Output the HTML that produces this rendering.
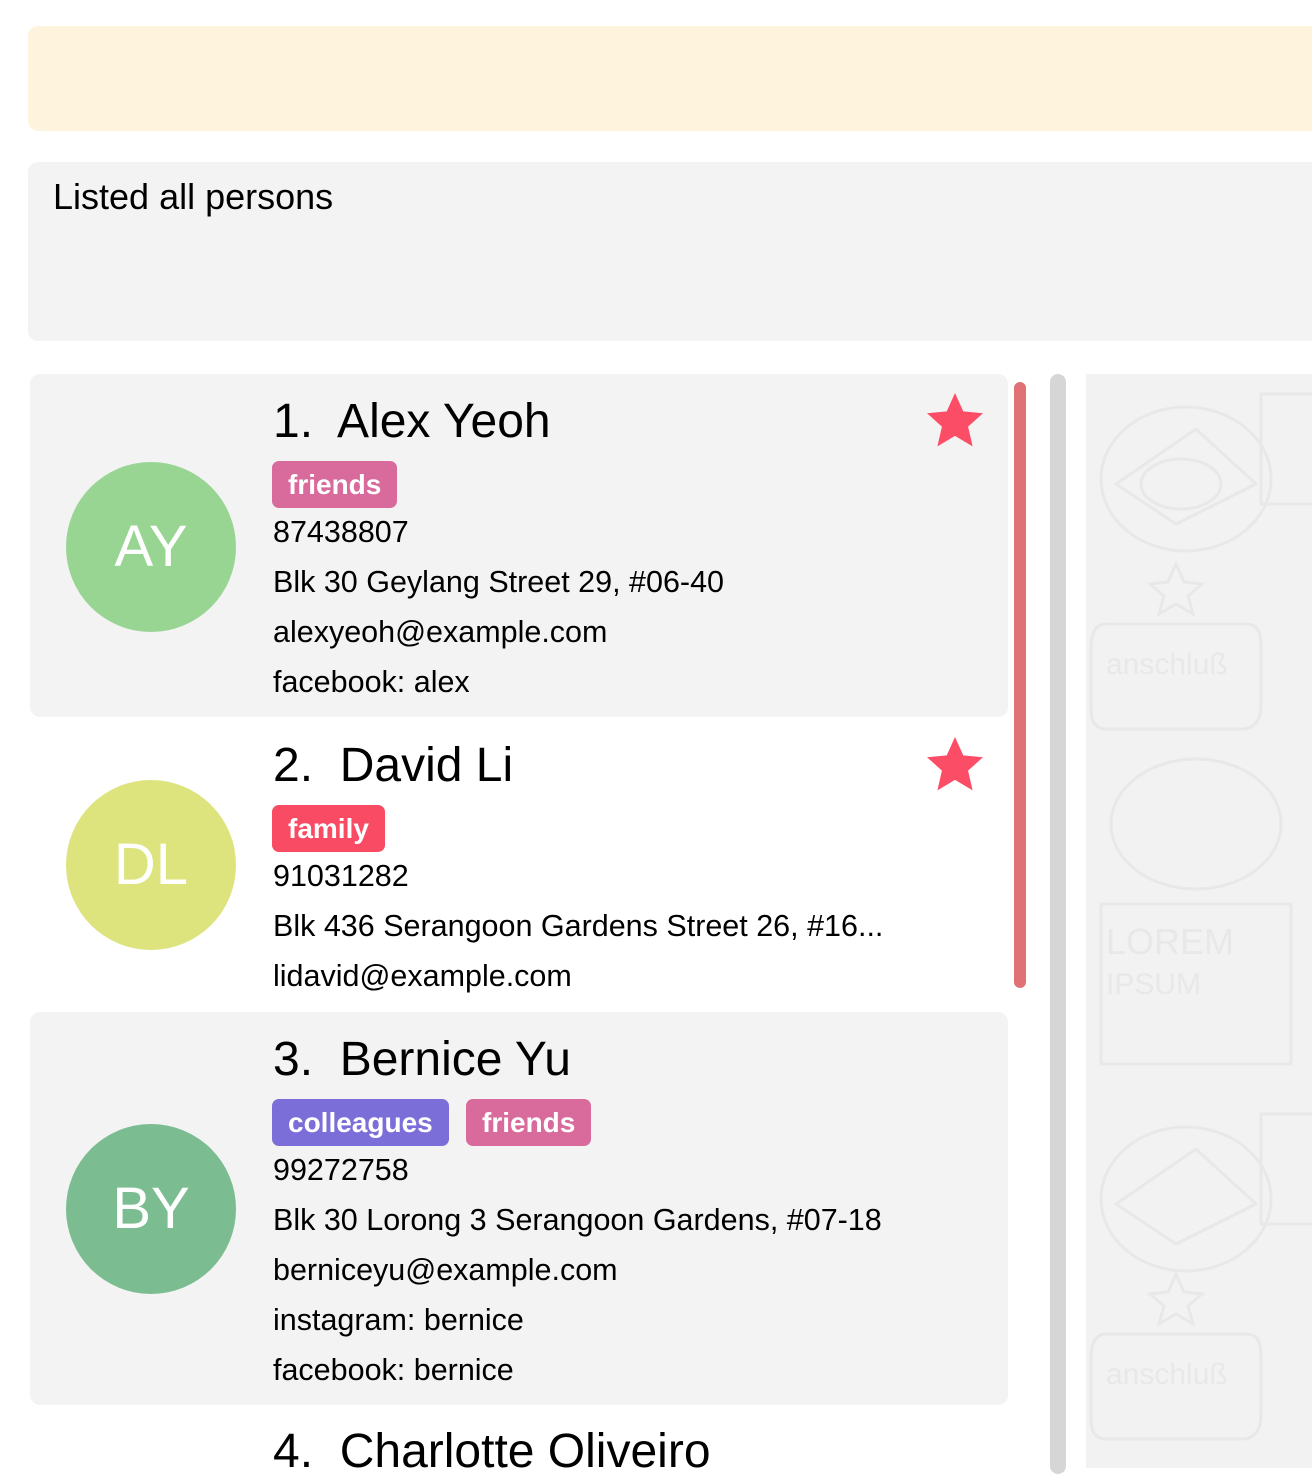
<!DOCTYPE html>
<html><head><meta charset="utf-8"><style>
*{margin:0;padding:0;box-sizing:border-box}
body{width:1312px;height:1468px;overflow:hidden;background:#fff;font-family:"Liberation Sans",sans-serif;position:relative;color:#000}
.a{position:absolute}
.t{position:absolute;font-size:30.5px;line-height:50px;white-space:nowrap;left:273px}
.n{position:absolute;font-size:48px;line-height:60px;white-space:nowrap;left:273px}
.tag{position:absolute;height:47px;border-radius:7px;color:#fff;font-weight:bold;font-size:28px;line-height:47px;padding:0 16px}
.av{position:absolute;left:66px;width:170px;height:170px;border-radius:50%;color:#fff;font-size:58px;line-height:170px;text-align:center;font-weight:300}
.star{position:absolute;left:922px;width:66px;height:64px}
</style></head><body>
<div class="a" style="left:28px;top:26px;width:1300px;height:105px;background:#fef3dd;border-radius:10px"></div>
<div class="a" style="left:28px;top:162px;width:1300px;height:179px;background:#f3f3f3;border-radius:10px"></div>
<div class="a" style="left:53px;top:174px;font-size:36px;line-height:46px">Listed all persons</div>

<div class="a" style="left:30px;top:374px;width:978px;height:343px;background:#f3f3f3;border-radius:10px"></div>
<div class="a" style="left:30px;top:1012px;width:978px;height:393px;background:#f3f3f3;border-radius:10px"></div>

<div class="a" style="left:1014px;top:382px;width:12px;height:606px;background:#e07276;border-radius:6px"></div>
<div class="a" style="left:1050px;top:374px;width:16px;height:1100px;background:#d6d6d6;border-radius:8px"></div>

<div class="a" style="left:1086px;top:374px;width:226px;height:1094px;background:#f2f2f2">
<svg width="226" height="1094" fill="none" stroke="#e8e8e8" stroke-width="3">
<ellipse cx="100" cy="105" rx="85" ry="72"/><path d="M30 110 L110 55 L170 110 L90 150 Z"/><ellipse cx="95" cy="110" rx="40" ry="25"/>
<path d="M175 20 h60 v110 h-60 z"/><path d="M90 190 l8 18 18 2 -14 12 5 18 -17 -10 -17 10 5 -18 -14 -12 18 -2z"/>
<path d="M20 250 h140 q15 0 15 20 v60 q0 25 -20 25 h-135 q-15 0 -15 -20 v-60 q0 -25 15 -25z"/>
<ellipse cx="110" cy="450" rx="85" ry="65"/>
<path d="M15 530 h190 v160 h-190z"/>
<ellipse cx="100" cy="825" rx="85" ry="72"/><path d="M30 830 L110 775 L170 830 L90 870 Z"/><path d="M175 740 h60 v110 h-60 z"/>
<path d="M90 900 l8 18 18 2 -14 12 5 18 -17 -10 -17 10 5 -18 -14 -12 18 -2z"/>
<path d="M20 960 h140 q15 0 15 20 v60 q0 25 -20 25 h-135 q-15 0 -15 -20 v-60 q0 -25 15 -25z"/>
<text x="20" y="300" font-size="30" fill="#e8e8e8" stroke="none" font-family="Liberation Sans">anschluß</text>
<text x="20" y="580" font-size="36" fill="#e8e8e8" stroke="none" font-family="Liberation Sans">LOREM</text>
<text x="20" y="620" font-size="30" fill="#e8e8e8" stroke="none" font-family="Liberation Sans">IPSUM</text>
<text x="20" y="1010" font-size="30" fill="#e8e8e8" stroke="none" font-family="Liberation Sans">anschluß</text>
</svg></div>

<div class="av" style="top:462px;background:#98d592">AY</div>
<div class="n" style="top:392px">1.&nbsp; Alex Yeoh</div>
<div class="tag" style="left:272px;top:461px;background:#d96b9c">friends</div>
<div class="t" style="top:507px">87438807</div>
<div class="t" style="top:557px">Blk 30 Geylang Street 29, #06-40</div>
<div class="t" style="top:607px">alexyeoh@example.com</div>
<div class="t" style="top:657px">facebook: alex</div>
<svg class="star" style="top:389px" viewBox="0 0 24 24"><path fill="#fb4d66" d="M12 1.5l3.1 6.9 7.4.7-5.6 5 1.7 7.4L12 17.6l-6.6 3.9 1.7-7.4-5.6-5 7.4-.7z"/></svg>

<div class="av" style="top:780px;background:#dde47e">DL</div>
<div class="n" style="top:736px">2.&nbsp; David Li</div>
<div class="tag" style="left:272px;top:805px;background:#f94b63">family</div>
<div class="t" style="top:851px">91031282</div>
<div class="t" style="top:901px">Blk 436 Serangoon Gardens Street 26, #16...</div>
<div class="t" style="top:951px">lidavid@example.com</div>
<svg class="star" style="top:733px" viewBox="0 0 24 24"><path fill="#fb4d66" d="M12 1.5l3.1 6.9 7.4.7-5.6 5 1.7 7.4L12 17.6l-6.6 3.9 1.7-7.4-5.6-5 7.4-.7z"/></svg>

<div class="av" style="top:1124px;background:#7bbd91">BY</div>
<div class="n" style="top:1030px">3.&nbsp; Bernice Yu</div>
<div class="tag" style="left:272px;top:1099px;background:#7c6ed8">colleagues</div>
<div class="tag" style="left:466px;top:1099px;background:#d96b9c">friends</div>
<div class="t" style="top:1145px">99272758</div>
<div class="t" style="top:1195px">Blk 30 Lorong 3 Serangoon Gardens, #07-18</div>
<div class="t" style="top:1245px">berniceyu@example.com</div>
<div class="t" style="top:1295px">instagram: bernice</div>
<div class="t" style="top:1345px">facebook: bernice</div>

<div class="n" style="top:1422px">4.&nbsp; Charlotte Oliveiro</div>
</body></html>
